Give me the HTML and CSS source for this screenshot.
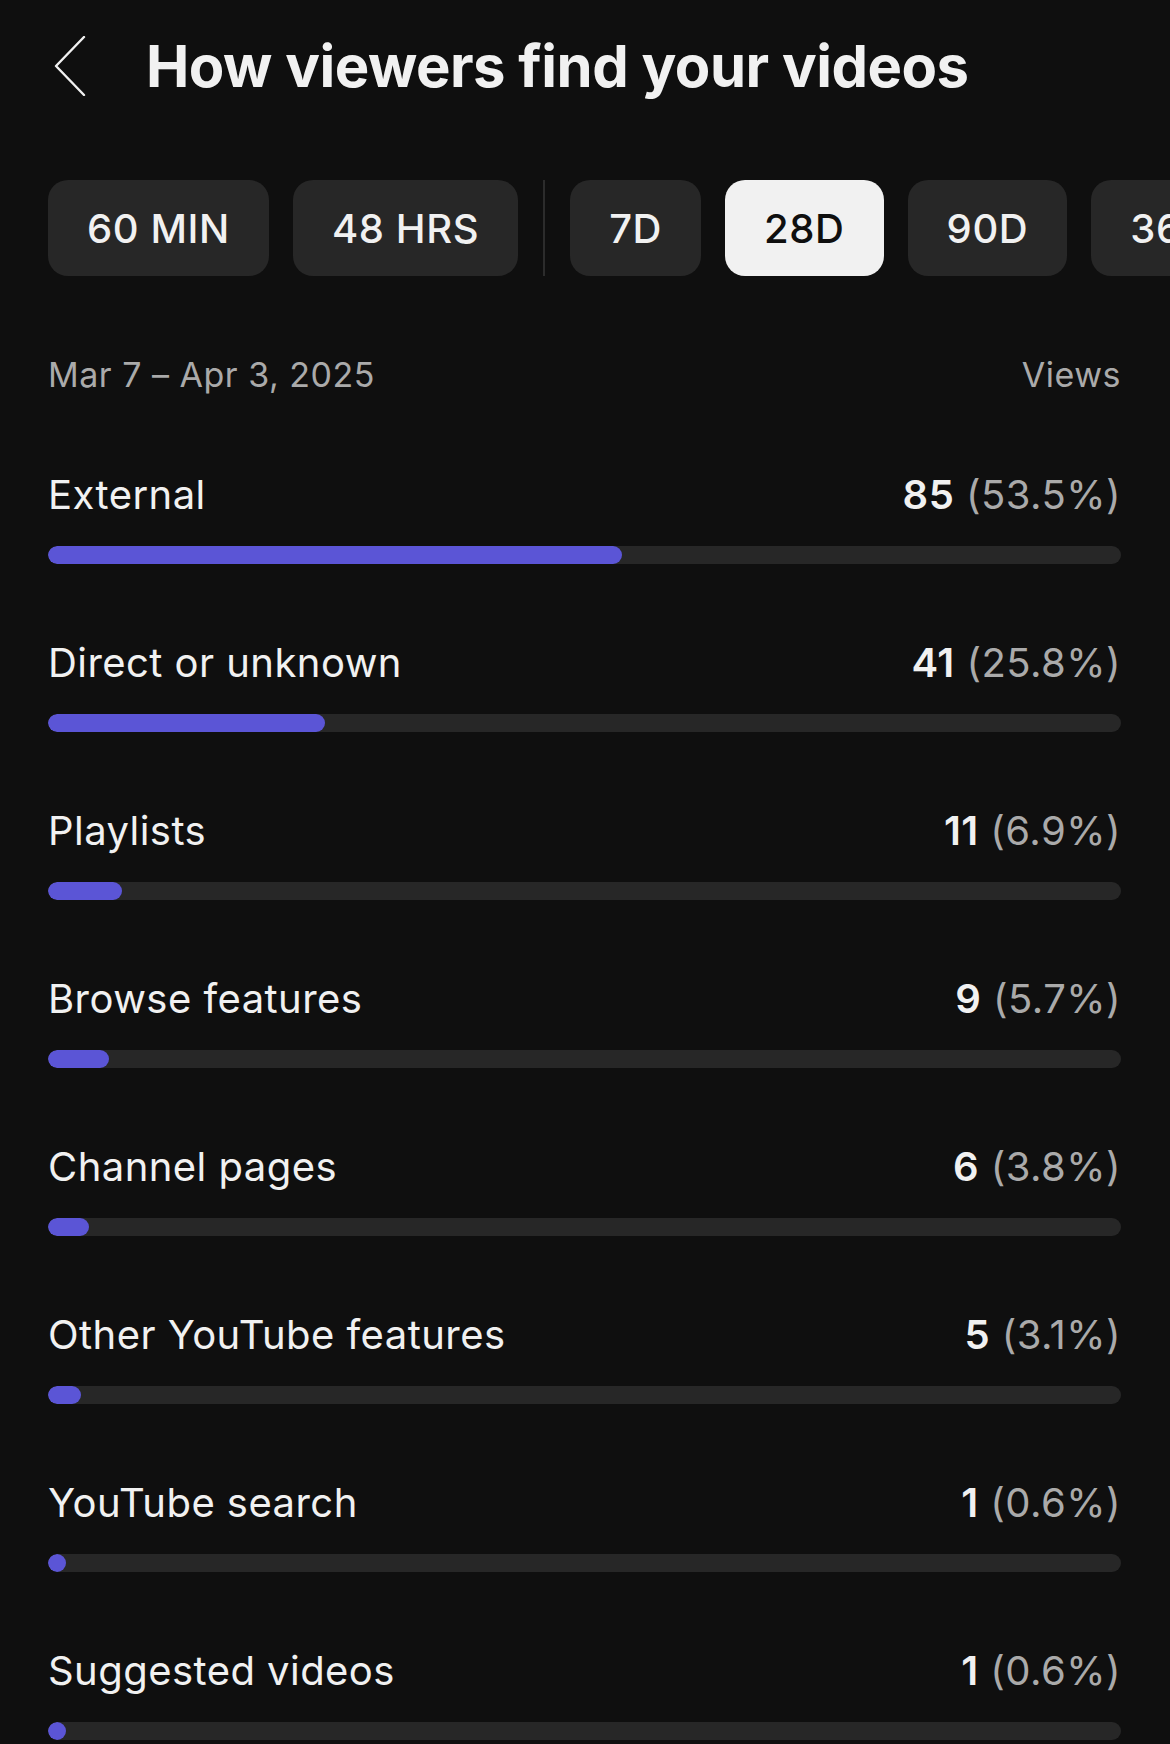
FILE: index.html
```html
<!DOCTYPE html>
<html lang="en">
<head>
<meta charset="utf-8">
<title>How viewers find your videos</title>
<link rel="stylesheet" href="styles.css">
</head>
<body>
<div class="page">
  <header class="header">
    <button class="back" aria-label="Back">
      <svg width="32" height="60" viewBox="0 0 32 60"><path d="M30 1 L2 30 L30 59" fill="none" stroke="#f1f1f1" stroke-width="2.4" stroke-linecap="round" stroke-linejoin="round"/></svg>
    </button>
    <h1 class="title">How viewers find your videos</h1>
  </header>

  <div class="chips">
    <span class="chip">60 MIN</span>
    <span class="chip">48 HRS</span>
    <span class="divider"></span>
    <span class="chip">7D</span>
    <span class="chip chip-active">28D</span>
    <span class="chip">90D</span>
    <span class="chip">365D</span>
  </div>

  <div class="meta">
    <span>Mar 7 – Apr 3, 2025</span>
    <span>Views</span>
  </div>

  <div class="list">
    <div class="row">
      <div class="row-top"><span class="label">External</span><span class="value"><b>85</b> <span class="pct">(53.5%)</span></span></div>
      <div class="track"><div class="fill" style="width:53.5%"></div></div>
    </div>
    <div class="row">
      <div class="row-top"><span class="label">Direct or unknown</span><span class="value"><b>41</b> <span class="pct">(25.8%)</span></span></div>
      <div class="track"><div class="fill" style="width:25.8%"></div></div>
    </div>
    <div class="row">
      <div class="row-top"><span class="label">Playlists</span><span class="value"><b>11</b> <span class="pct">(6.9%)</span></span></div>
      <div class="track"><div class="fill" style="width:6.9%"></div></div>
    </div>
    <div class="row">
      <div class="row-top"><span class="label">Browse features</span><span class="value"><b>9</b> <span class="pct">(5.7%)</span></span></div>
      <div class="track"><div class="fill" style="width:5.7%"></div></div>
    </div>
    <div class="row">
      <div class="row-top"><span class="label">Channel pages</span><span class="value"><b>6</b> <span class="pct">(3.8%)</span></span></div>
      <div class="track"><div class="fill" style="width:3.8%"></div></div>
    </div>
    <div class="row">
      <div class="row-top"><span class="label">Other YouTube features</span><span class="value"><b>5</b> <span class="pct">(3.1%)</span></span></div>
      <div class="track"><div class="fill" style="width:3.1%"></div></div>
    </div>
    <div class="row">
      <div class="row-top"><span class="label">YouTube search</span><span class="value"><b>1</b> <span class="pct">(0.6%)</span></span></div>
      <div class="track"><div class="fill" style="width:0.6%"></div></div>
    </div>
    <div class="row">
      <div class="row-top"><span class="label">Suggested videos</span><span class="value"><b>1</b> <span class="pct">(0.6%)</span></span></div>
      <div class="track"><div class="fill" style="width:0.6%"></div></div>
    </div>
  </div>
</div>
</body>
</html>
```

FILE: styles.css
```css
html, body {
  margin: 0;
  padding: 0;
  background: #0f0f0f;
  overflow: hidden;
}
body {
  font-family: Inter, "Noto Sans", "Liberation Sans", sans-serif;
  color: #f1f1f1;
}
.page {
  padding: 31px 49px 0 48px;
}
.header {
  display: flex;
  align-items: center;
  height: 70px;
}
.back {
  background: none;
  border: 0;
  padding: 0;
  margin: 0 0 0 6px;
  width: 32px;
  height: 60px;
  display: flex;
  align-items: center;
}
.back svg { display: block; }
.title {
  margin: 0 0 0 60px;
  font-size: 58px;
  line-height: 70px;
  font-weight: 700;
  letter-spacing: -0.5px;
  color: #f1f1f1;
  white-space: nowrap;
}
.chips {
  display: flex;
  align-items: stretch;
  gap: 24px;
  margin-top: 79px;
  margin-right: -49px;
  height: 96px;
  overflow: hidden;
}
.chip {
  flex-shrink: 0;
  display: flex;
  align-items: center;
  justify-content: center;
  padding: 0 39px;
  background: #272727;
  border-radius: 20px;
  font-size: 40px;
  font-weight: 500;
  letter-spacing: 0.6px;
  color: #f1f1f1;
  white-space: nowrap;
}
.chip-active {
  background: #f1f1f1;
  color: #0f0f0f;
}
.divider {
  flex-shrink: 0;
  width: 2px;
  background: #2c2c2c;
  margin: 0 1px;
}
.meta {
  display: flex;
  justify-content: space-between;
  margin-top: 77px;
  font-size: 34px;
  line-height: 44px;
  letter-spacing: 0.5px;
  color: #aaaaaa;
}
.list {
  display: flex;
  flex-direction: column;
  gap: 74.5px;
  margin-top: 73px;
}
.row {
  display: flex;
  flex-direction: column;
  gap: 25.5px;
}
.row-top {
  display: flex;
  justify-content: space-between;
  align-items: baseline;
  font-size: 40px;
  line-height: 50px;
  letter-spacing: 0.45px;
}
.label { color: #f1f1f1; }
.value b { font-weight: 600; color: #f1f1f1; }
.pct { color: #aaaaaa; }
.track {
  height: 18px;
  border-radius: 9px;
  background: #272727;
  overflow: hidden;
}
.fill {
  height: 100%;
  min-width: 18px;
  border-radius: 9px;
  background: #5b55d6;
}
```
